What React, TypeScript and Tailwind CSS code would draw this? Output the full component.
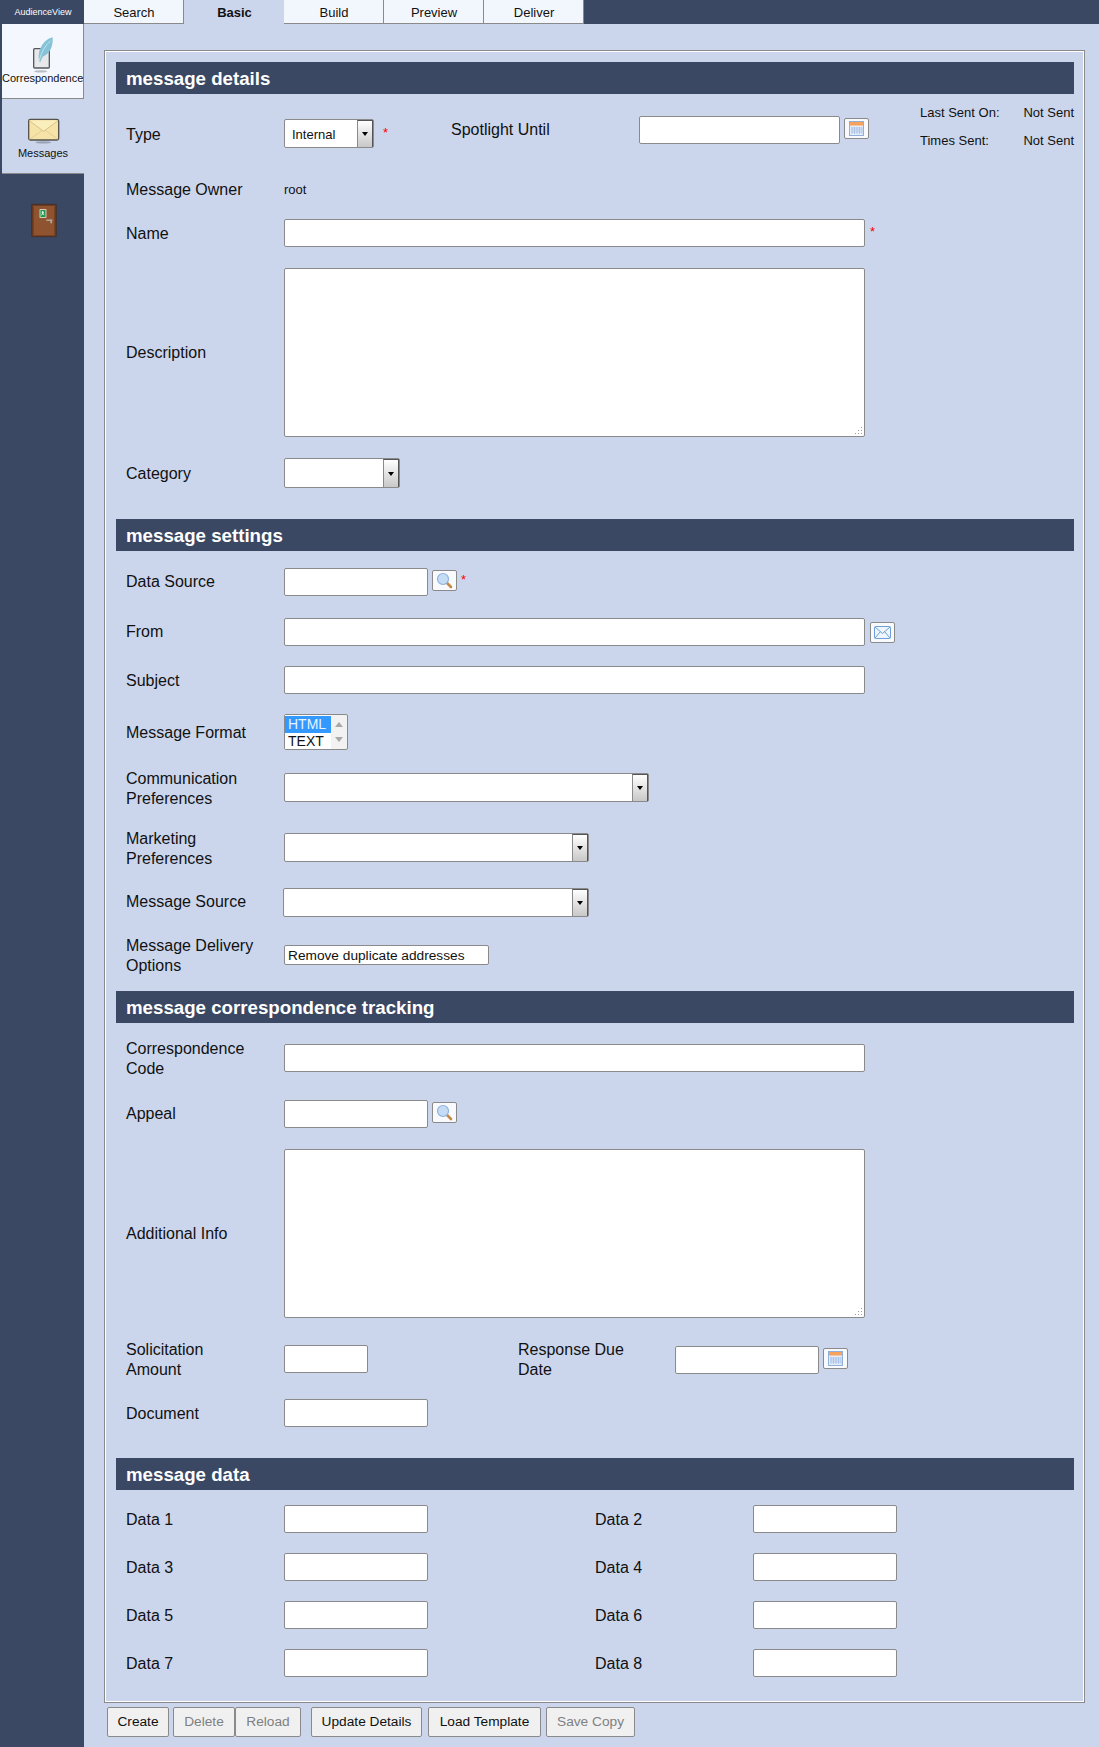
import type { ReactNode } from 'react';

const fieldBorder = 'border border-[#8a8a8a] rounded-[2px] bg-white';

const Tab = ({ name, active }: { name: string; active?: boolean }) => (
  <div
    className={
      active
        ? 'w-[100px] h-[24px] bg-[#cbd6ed] pl-[1px] text-center text-[13px] leading-[26px] font-bold text-[#111]'
        : 'w-[100px] h-[24px] box-border bg-[#f2f7fe] border-r border-b border-[#8a8a8a] pl-[1px] text-center text-[13px] leading-[26px] text-[#111]'
    }
  >
    {name}
  </div>
);

const Header = ({ title, className }: { title: string; className: string }) => (
  <div className={`h-[32px] bg-[#3b4863] pl-[10px] text-[18.7px] leading-[33px] font-bold text-white ${className}`}>
    {title}
  </div>
);

const Row = ({ label, className, labelClass = '', children }: { label: ReactNode; className: string; labelClass?: string; children?: ReactNode }) => (
  <div className={`flex items-center ${className}`}>
    <span className={`w-[168px] shrink-0 pl-[10px] text-[16px] leading-[20px] text-[#111] ${labelClass}`}>{label}</span>
    {children}
  </div>
);

const Star = ({ className }: { className: string }) => (
  <span className={`self-start text-[13px] leading-[16px] text-[#ff0000] ${className}`}>*</span>
);

const TextInput = ({ className }: { className: string }) => (
  <input type="text" className={`box-border h-[28px] shrink-0 ${fieldBorder} ${className}`} />
);

// dotted grip like the old browser's textarea corner
const Area = () => (
  <div className="relative h-[169px] w-[581px]">
    <textarea className={`box-border block h-full w-full resize-none ${fieldBorder}`} />
    <svg width="9" height="9" viewBox="0 0 9 9" className="absolute bottom-[2px] right-[2px]">
      <path d="M7 1h1v1H7zM4 4h1v1H4zM7 4h1v1H7zM1 7h1v1H1zM4 7h1v1H4zM7 7h1v1H7z" fill="#9a9a9a" />
    </svg>
  </div>
);

const Select = ({ value, className }: { value?: string; className: string }) => (
  <div className={`box-border flex h-[29px] shrink-0 ${fieldBorder} ${className}`}>
    <span className="flex-1 pl-[7px] text-[13px] leading-[29px] text-[#111]">{value}</span>
    <span className="flex w-[16px] items-center justify-center border-l border-[#8a8a8a] border-r border-r-[#555] border-t border-t-[#555] bg-gradient-to-b from-white to-[#c8c8c8]">
      <span className="h-0 w-0 border-x-[3.5px] border-t-[4px] border-x-transparent border-t-black" />
    </span>
  </div>
);

const IconButton = ({ className, children }: { className: string; children: ReactNode }) => (
  <button className={`box-border flex h-[21px] w-[25px] shrink-0 items-center justify-center rounded-[2px] border border-[#8a8a8a] bg-[#f8fafe] ${className}`}>
    {children}
  </button>
);

const CalendarIcon = () => (
  <svg width="15" height="15" viewBox="0 0 15 15">
    <rect x="0.5" y="0.5" width="14" height="14" fill="#e4edf9" stroke="#8fb0dc" />
    <rect x="1" y="1" width="13" height="3.5" fill="#f7a25c" />
    <path d="M3 6v7M5.5 6v7M8 6v7M10.5 6v7M13 6v7M2 7h11M2 9h11M2 11h11" stroke="#a4bee4" strokeWidth="0.8" />
  </svg>
);

const SearchIcon = () => (
  <svg width="17" height="17" viewBox="0 0 17 17">
    <path d="M10.5 10.5l4.5 4.5" stroke="#c58a45" strokeWidth="2.6" strokeLinecap="round" />
    <circle cx="7" cy="7" r="5.5" fill="#c5dcf4" stroke="#8db2de" strokeWidth="1.2" />
  </svg>
);

const MailIcon = () => (
  <svg width="17" height="13" viewBox="0 0 17 13">
    <rect x="0.5" y="0.5" width="16" height="12" rx="1" fill="#eef5fd" stroke="#6f9fd8" />
    <path d="M1 1l7.5 6.5L16 1M1 12l5.5-6.5M16 12l-5.5-6.5" fill="none" stroke="#6f9fd8" />
  </svg>
);

const ToolButton = ({ name, className, off }: { name: string; className: string; off?: boolean }) => (
  <button
    className={`box-border h-[30px] shrink-0 rounded-[2px] border border-[#8a8a8a] bg-[#f0f0f0] text-[13.7px] ${off ? 'text-[#808080]' : 'text-[#111]'} ${className}`}
  >
    {name}
  </button>
);

const DataRow = ({ left, right, className }: { left: string; right: string; className: string }) => (
  <Row label={left} className={className}>
    <TextInput className="w-[144px] self-start" />
    <span className="ml-[167px] w-[158px] shrink-0 text-[16px] leading-[20px] text-[#111]">{right}</span>
    <TextInput className="w-[144px] self-start" />
  </Row>
);

export default function App() {
  return (
    <div className="flex h-[1747px] w-[1099px] overflow-hidden bg-[#cbd6ed] font-['Liberation_Sans',Arial,sans-serif]">
      {/* left rail */}
      <div className="h-full w-[84px] shrink-0 bg-[#3b4863]">
        <div className="h-[24px] pl-[2px] text-center text-[9px] leading-[24px] text-white">AudienceView</div>
        <div className="ml-[2px] box-border h-[75px] w-[82px] border-r border-b border-[#8a8a8a] bg-[#f4f8fe] pt-[6px] text-center">
          <svg width="50" height="42" viewBox="0 0 150 126" className="ml-[18px] block overflow-visible">
            <ellipse cx="62" cy="124" rx="20" ry="3.5" fill="#b9bcc2" />
            <rect x="41" y="56" width="47" height="58" rx="3" fill="#e6e8ea" stroke="#55585e" strokeWidth="4" />
            <path d="M56 86C54 56 72 28 98 22 100 48 90 72 68 80L60 98Z" fill="#86c3d8" />
            <path d="M58 90C64 66 76 46 92 32" fill="none" stroke="#d9f0f6" strokeWidth="2" />
          </svg>
          <div className="mt-[-1px] text-[11px] leading-[14px] text-[#111]">Correspondence</div>
        </div>
        <div className="ml-[2px] box-border h-[75px] w-[82px] border-b border-[#8a8a8a] bg-[#cbd6ed] pt-[11px] text-center">
          <svg width="50" height="35" viewBox="0 0 150 105" className="ml-[18px] block">
            <ellipse cx="70" cy="97" rx="24" ry="3.5" fill="#9aa3b5" />
            <rect x="26" y="28" width="90" height="62" rx="5" fill="#f5e3a8" stroke="#55534c" strokeWidth="4" />
            <path d="M28 88L72 58l42 30" fill="none" stroke="#dcc68a" strokeWidth="2" />
            <path d="M28 32l43 32 43-32" fill="#fbeebd" stroke="#c8b070" strokeWidth="2" />
          </svg>
          <div className="mt-[1px] text-[11px] leading-[14px] text-[#111]">Messages</div>
        </div>
        <svg width="50" height="50" viewBox="0 0 150 150" className="ml-[19px] mt-[22px] block">
          <rect x="38" y="25" width="74" height="97" rx="2" fill="#6b3a20" stroke="#3f2a1e" strokeWidth="2" />
          <rect x="44" y="30" width="62" height="88" fill="#8f5330" />
          <rect x="62" y="40" width="20" height="25" fill="#ffffff" />
          <rect x="64" y="42" width="16" height="21" fill="#1d9a4c" />
          <path d="M71 45v6l-3 7M71 51l4 6M68 49h7" fill="none" stroke="#fff" strokeWidth="2.5" />
          <rect x="82" y="71" width="18" height="3" fill="#c9c9c9" />
          <rect x="94" y="71" width="5" height="11" fill="#a9a9a9" />
        </svg>
      </div>

      {/* main column */}
      <div className="min-w-0 flex-1">
        <div className="flex h-[24px] bg-[#3b4863]">
          <Tab name="Search" />
          <Tab name="Basic" active />
          <Tab name="Build" />
          <Tab name="Preview" />
          <Tab name="Deliver" />
        </div>

        <div className="ml-[20px] mt-[26px] box-border h-[1653px] w-[981px] border border-[#8a8a8a] py-[11px] pl-[11px] pr-[10px] shadow-[inset_1px_1px_0_#ffffff,inset_-1px_-1px_0_#ffffff]">
          <Header title="message details" className="" />

          <div className="mt-[11px] flex h-[43px] items-start">
            <span className="mt-[20px] w-[168px] shrink-0 pl-[10px] text-[16px] leading-[20px] text-[#111]">Type</span>
            <Select value="Internal" className="mt-[14px] w-[90px]" />
            <div className="w-[77px] shrink-0">
              <Star className="ml-[9px] mt-[20px] block" />
            </div>
            <span className="mt-[15px] w-[188px] shrink-0 text-[16px] leading-[20px] text-[#111]">Spotlight Until</span>
            <TextInput className="mt-[11px] w-[201px]" />
            <IconButton className="ml-[4px] mt-[13px]"><CalendarIcon /></IconButton>
            <div className="ml-[51px] flex-1 text-[13px] leading-[16px] text-[#111]">
              <div className="flex justify-between"><span>Last Sent On:</span><span>Not Sent</span></div>
              <div className="mt-[12px] flex justify-between"><span>Times Sent:</span><span>Not Sent</span></div>
            </div>
          </div>

          <Row label="Message Owner" labelClass="pt-[2px]" className="mt-[31px] h-[20px]">
            <span className="pt-[2px] text-[13px] text-[#111]">root</span>
          </Row>

          <Row label="Name" labelClass="pt-[2px]" className="mt-[20px] h-[28px]">
            <TextInput className="w-[581px]" />
            <Star className="ml-[5px] mt-[5px]" />
          </Row>

          <Row label="Description" className="mt-[21px] h-[169px]">
            <Area />
          </Row>

          <Row label="Category" labelClass="pt-[2px]" className="mt-[21px] h-[30px]">
            <Select className="h-[30px] w-[116px]" />
          </Row>

          <Header title="message settings" className="mt-[31px]" />

          <Row label="Data Source" className="mt-[17px] h-[28px]">
            <TextInput className="w-[144px]" />
            <IconButton className="ml-[4px] self-start mt-[2px]"><SearchIcon /></IconButton>
            <Star className="ml-[4px] mt-[4px]" />
          </Row>

          <Row label="From" className="mt-[22px] h-[28px]">
            <TextInput className="w-[581px]" />
            <IconButton className="ml-[5px]"><MailIcon /></IconButton>
          </Row>

          <Row label="Subject" labelClass="pt-[2px]" className="mt-[20px] h-[28px]">
            <TextInput className="w-[581px]" />
          </Row>

          <Row label="Message Format" labelClass="pt-[2px]" className="mt-[20px] h-[36px]">
            <div className="box-border flex h-[36px] w-[64px] rounded-[2px] border border-[#8a8a8a] bg-[#f2f2f2]">
              <div className="w-[46px] bg-white pt-[1px] text-[14px] leading-[16.5px]">
                <div className="bg-[#3399ff] pl-[3px] text-[#e8f4ff]">HTML</div>
                <div className="pl-[3px] text-[#111]">TEXT</div>
              </div>
              <div className="flex flex-1 flex-col items-center justify-between py-[7px]">
                <span className="h-0 w-0 border-x-[4px] border-b-[5px] border-x-transparent border-b-[#a8a8a8]" />
                <span className="h-0 w-0 border-x-[4px] border-t-[5px] border-x-transparent border-t-[#a8a8a8]" />
              </div>
            </div>
          </Row>

          <Row label={<>Communication<br />Preferences</>} labelClass="pt-[2px]" className="mt-[23px] h-[29px]">
            <Select className="w-[365px]" />
          </Row>

          <Row label={<>Marketing<br />Preferences</>} labelClass="pt-[2px]" className="mt-[31px] h-[29px]">
            <Select className="w-[305px]" />
          </Row>

          <Row label="Message Source" labelClass="pb-[2px]" className="mt-[26px] h-[29px]">
            <Select className="ml-[-1px] w-[306px]" />
          </Row>

          <Row label={<>Message Delivery<br />Options</>} labelClass="pt-[2px]" className="mt-[18px] h-[40px]">
            <div className={`box-border h-[20px] w-[205px] pl-[3px] text-[13.7px] leading-[19px] text-[#111] ${fieldBorder}`}>
              Remove duplicate addresses
            </div>
          </Row>

          <Header title="message correspondence tracking" className="mt-[16px]" />

          <Row label={<>Correspondence<br />Code</>} className="mt-[16px] h-[40px]">
            <TextInput className="mt-[5px] w-[581px] self-start" />
          </Row>

          <Row label="Appeal" className="mt-[21px] h-[28px]">
            <TextInput className="w-[144px]" />
            <IconButton className="ml-[4px] self-start mt-[2px]"><SearchIcon /></IconButton>
          </Row>

          <Row label="Additional Info" className="mt-[21px] h-[169px]">
            <Area />
          </Row>

          <Row label={<>Solicitation<br />Amount</>} className="mt-[22px] h-[40px]">
            <TextInput className="mt-[5px] w-[84px] self-start" />
            <span className="ml-[150px] w-[157px] shrink-0 text-[16px] leading-[20px] text-[#111]">Response Due<br />Date</span>
            <TextInput className="w-[144px]" />
            <IconButton className="ml-[4px] mt-[8px] self-start"><CalendarIcon /></IconButton>
          </Row>

          <Row label="Document" className="mt-[19px] h-[30px]">
            <TextInput className="w-[144px] self-start" />
          </Row>

          <Header title="message data" className="mt-[29px]" />

          <DataRow left="Data 1" right="Data 2" className="mt-[15px] h-[30px]" />
          <DataRow left="Data 3" right="Data 4" className="mt-[18px] h-[30px]" />
          <DataRow left="Data 5" right="Data 6" className="mt-[18px] h-[30px]" />
          <DataRow left="Data 7" right="Data 8" className="mt-[18px] h-[30px]" />
        </div>

        <div className="ml-[23px] mt-[4px] flex">
          <ToolButton name="Create" className="w-[62px]" />
          <ToolButton name="Delete" off className="ml-[4px] w-[62px]" />
          <ToolButton name="Reload" off className="w-[66px]" />
          <ToolButton name="Update Details" className="ml-[10px] w-[111px]" />
          <ToolButton name="Load Template" className="ml-[6px] w-[113px]" />
          <ToolButton name="Save Copy" off className="ml-[5px] w-[89px]" />
        </div>
      </div>
    </div>
  );
}
